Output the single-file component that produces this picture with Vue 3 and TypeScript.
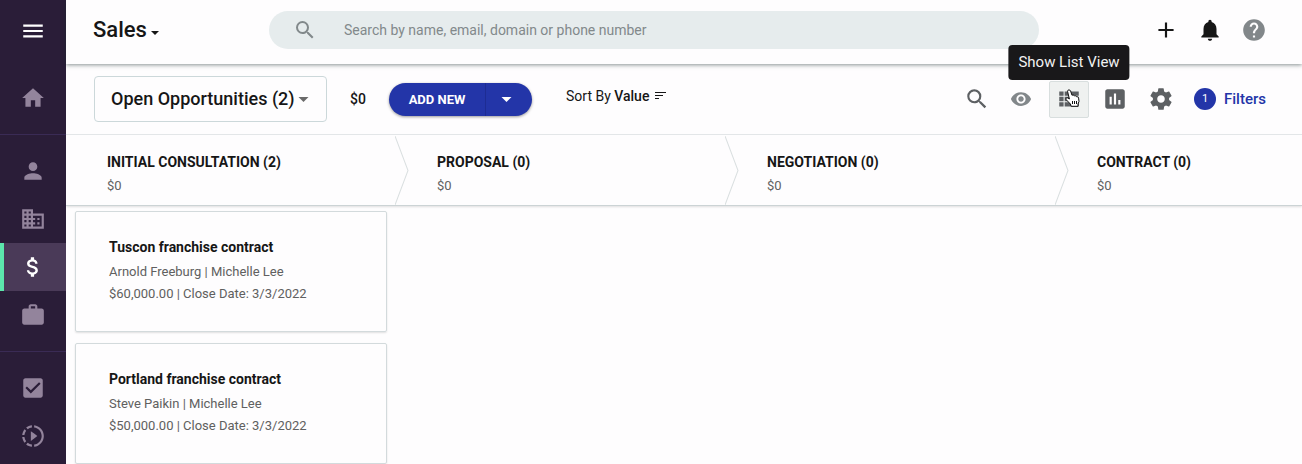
<script setup lang="ts">
import { ref } from 'vue'

interface NavItem {
  label: string
  path: string
  active?: boolean
}

interface Deal {
  title: string
  people: string
  details: string
}

interface Stage {
  name: string
  total: string
  deals: Deal[]
}

const searchPath =
  'M15.5 14h-.79l-.28-.27A6.47 6.47 0 0 0 16 9.5 6.5 6.5 0 1 0 9.5 16c1.61 0 3.09-.59 4.23-1.57l.27.28v.79l5 4.99L20.49 19l-4.99-5zm-6 0C7.01 14 5 11.99 5 9.5S7.01 5 9.5 5 14 7.01 14 9.5 11.99 14 9.5 14z'

const navGroups: NavItem[][] = [
  [{ label: 'Home', path: 'M10 20v-6h4v6h5v-8h3L12 3 2 12h3v8z' }],
  [
    {
      label: 'People',
      path: 'M12 12c2.21 0 4-1.79 4-4s-1.79-4-4-4-4 1.79-4 4 1.79 4 4 4zm0 2c-2.67 0-8 1.34-8 4v2h16v-2c0-2.66-5.33-4-8-4z',
    },
    {
      label: 'Companies',
      path: 'M12 7V3H2v18h20V7H12zM6 19H4v-2h2v2zm0-4H4v-2h2v2zm0-4H4V9h2v2zm0-4H4V5h2v2zm4 12H8v-2h2v2zm0-4H8v-2h2v2zm0-4H8V9h2v2zm0-4H8V5h2v2zm10 12h-8v-2h2v-2h-2v-2h2v-2h-2V9h8v10zm-2-8h-2v2h2v-2zm0 4h-2v2h2v-2z',
    },
    {
      label: 'Opportunities',
      active: true,
      path: 'M11.8 10.9c-2.27-.59-3-1.2-3-2.15 0-1.09 1.01-1.85 2.7-1.85 1.78 0 2.44.85 2.5 2.1h2.21c-.07-1.72-1.12-3.3-3.21-3.81V3h-3v2.16c-1.94.42-3.5 1.68-3.5 3.61 0 2.31 1.91 3.46 4.7 4.13 2.5.6 3 1.48 3 2.41 0 .69-.49 1.79-2.7 1.79-2.06 0-2.87-.92-2.98-2.1h-2.2c.12 2.19 1.76 3.42 3.68 3.83V21h3v-2.15c1.95-.37 3.5-1.5 3.5-3.55 0-2.84-2.43-3.81-4.7-4.4z',
    },
    {
      label: 'Projects',
      path: 'M20 6h-4V4c0-1.11-.89-2-2-2h-4c-1.11 0-2 .89-2 2v2H4c-1.11 0-1.99.89-1.99 2L2 19c0 1.11.89 2 2 2h16c1.11 0 2-.89 2-2V8c0-1.11-.89-2-2-2zm-6 0h-4V4h4v2z',
    },
  ],
  [
    {
      label: 'Tasks',
      path: 'M19 3H5c-1.11 0-2 .9-2 2v14c0 1.1.89 2 2 2h14c1.11 0 2-.9 2-2V5c0-1.1-.89-2-2-2zm-9 14l-5-5 1.41-1.41L10 14.17l7.59-7.59L19 8l-9 9z',
    },
    {
      label: 'Automations',
      path: 'M13.05 9.79L10 7.5v9l3.05-2.29L16 12zM11 4.07V2.05c-2.01.2-3.84 1-5.32 2.21L7.1 5.69c1.11-.86 2.44-1.44 3.9-1.62zM5.69 7.1L4.26 5.68C3.05 7.16 2.25 8.99 2.05 11h2.02c.18-1.46.76-2.79 1.62-3.9zM4.07 13H2.05c.2 2.01 1 3.84 2.21 5.32l1.43-1.43c-.86-1.1-1.44-2.43-1.62-3.89zm1.61 6.74C7.16 20.95 9 21.75 11 21.95v-2.02c-1.46-.18-2.79-.76-3.9-1.62l-1.42 1.43zM22 12c0 5.16-3.92 9.42-8.95 9.95v-2.02C16.97 19.41 20 16.05 20 12s-3.03-7.41-6.95-7.93V2.05C18.08 2.58 22 6.84 22 12z',
    },
  ],
]

const stages: Stage[] = [
  {
    name: 'INITIAL CONSULTATION (2)',
    total: '$0',
    deals: [
      {
        title: 'Tuscon franchise contract',
        people: 'Arnold Freeburg | Michelle Lee',
        details: '$60,000.00 | Close Date: 3/3/2022',
      },
      {
        title: 'Portland franchise contract',
        people: 'Steve Paikin | Michelle Lee',
        details: '$50,000.00 | Close Date: 3/3/2022',
      },
    ],
  },
  { name: 'PROPOSAL (0)', total: '$0', deals: [] },
  { name: 'NEGOTIATION (0)', total: '$0', deals: [] },
  { name: 'CONTRACT (0)', total: '$0', deals: [] },
]

const query = ref('')
const view = ref('open')
</script>

<template>
  <div class="app">
    <nav class="sidebar" aria-label="Main">
      <button class="menu" type="button" aria-label="Menu">
        <svg viewBox="0 0 24 24"><path d="M3 18h18v-2H3v2zm0-5h18v-2H3v2zm0-7v2h18V6H3z" /></svg>
      </button>
      <div v-for="(group, i) in navGroups" :key="i" class="group">
        <a
          v-for="item in group"
          :key="item.label"
          href="#"
          class="nav-item"
          :class="{ active: item.active }"
          :aria-label="item.label"
        >
          <svg viewBox="0 0 24 24"><path :d="item.path" /></svg>
        </a>
      </div>
    </nav>

    <div class="main">
      <header class="header">
        <button class="title" type="button">
          Sales
          <svg viewBox="0 0 8 4"><path d="M0 0h8L4 4z" /></svg>
        </button>
        <label class="search">
          <svg viewBox="0 0 24 24"><path :d="searchPath" /></svg>
          <input
            v-model="query"
            type="text"
            aria-label="Search"
            placeholder="Search by name, email, domain or phone number"
          />
        </label>
        <div class="header-actions">
          <button type="button" aria-label="Add">
            <svg viewBox="0 0 24 24"><path d="M19 13h-6v6h-2v-6H5v-2h6V5h2v6h6v2z" /></svg>
          </button>
          <button type="button" aria-label="Notifications">
            <svg viewBox="0 0 24 24">
              <path d="M12 22c1.1 0 2-.9 2-2h-4c0 1.1.89 2 2 2zm6-6v-5c0-3.07-1.64-5.64-4.5-6.32V4c0-.83-.67-1.5-1.5-1.5s-1.5.67-1.5 1.5v.68C7.63 5.36 6 7.92 6 11v5l-2 2v1h16v-1l-2-2z" />
            </svg>
          </button>
          <button class="help" type="button" aria-label="Help">
            <svg viewBox="0 0 24 24">
              <path d="M12 2C6.48 2 2 6.48 2 12s4.48 10 10 10 10-4.48 10-10S17.52 2 12 2zm1 17h-2v-2h2v2zm2.07-7.75l-.9.92C13.45 12.9 13 13.5 13 15h-2v-.5c0-1.1.45-2.1 1.17-2.83l1.24-1.26c.37-.36.59-.86.59-1.41 0-1.1-.9-2-2-2s-2 .9-2 2H8c0-2.21 1.79-4 4-4s4 1.79 4 4c0 .88-.36 1.68-.93 2.25z" />
            </svg>
          </button>
        </div>
      </header>

      <div class="toolbar">
        <div class="picker">
          <select v-model="view" aria-label="Opportunity view">
            <option value="open">Open Opportunities (2)</option>
          </select>
          <svg viewBox="0 0 10 5"><path d="M0 0h10L5 5z" /></svg>
        </div>
        <span class="sum">$0</span>
        <div class="split">
          <button class="add" type="button">ADD NEW</button>
          <button class="more" type="button" aria-label="More add options">
            <svg viewBox="0 0 10 5"><path d="M0 0h10L5 5z" /></svg>
          </button>
        </div>
        <button class="sort" type="button">
          <span>Sort By <b>Value</b></span>
          <svg viewBox="0 0 11 8"><path d="M0 0h11v1H0zM0 3h8v1H0zM0 6h4v1H0z" /></svg>
        </button>

        <div class="tools">
          <button type="button" aria-label="Search opportunities">
            <svg viewBox="0 0 24 24"><path :d="searchPath" /></svg>
          </button>
          <button class="eye" type="button" aria-label="Visibility">
            <svg viewBox="0 0 24 24">
              <path d="M12 4.5C7 4.5 2.73 7.61 1 12c1.73 4.39 6 7.5 11 7.5s9.27-3.11 11-7.5c-1.73-4.39-6-7.5-11-7.5zM12 17c-2.76 0-5-2.24-5-5s2.24-5 5-5 5 2.24 5 5-2.24 5-5 5zm0-8c-1.66 0-3 1.34-3 3s1.34 3 3 3 3-1.34 3-3-1.34-3-3-3z" />
            </svg>
          </button>
          <button class="list" type="button" aria-describedby="list-tip" aria-label="List view">
            <svg viewBox="0 0 24 24">
              <path d="M3 9h4V5H3v4zm0 5h4v-4H3v4zm5 0h13v-4H8v4zm0-9v4h13V5H8zM3 19h4v-4H3v4zm5 0h13v-4H8v4z" />
            </svg>
            <svg class="pointer" viewBox="0 0 15 18">
              <path
                d="M2.5 2.2C2.6.6 5 .4 5.6 2L7 6.3C8 5.7 9.1 6.1 9.5 7 10.4 6.5 11.4 7 11.7 7.8 12.7 7.5 13.5 8.2 13.6 9.2L14 12.4 13 15V17.3H6.2L5.4 15 1.2 10.7C.2 9.4 1.8 8.2 3 9L4.4 10z"
              />
              <path class="fingers" d="M7.5 12v3M9.5 12v3M11.5 12v3" />
            </svg>
            <span id="list-tip" class="tip" role="tooltip">Show List View</span>
          </button>
          <button type="button" aria-label="Reports">
            <svg viewBox="0 0 24 24">
              <path d="M19 3H5c-1.1 0-2 .9-2 2v14c0 1.1.9 2 2 2h14c1.1 0 2-.9 2-2V5c0-1.1-.9-2-2-2zM9 17H7v-7h2v7zm4 0h-2V7h2v10zm4 0h-2v-4h2v4z" />
            </svg>
          </button>
          <button type="button" aria-label="Settings">
            <svg viewBox="0 0 24 24">
              <path d="M19.43 12.98c.04-.32.07-.64.07-.98s-.03-.66-.07-.98l2.11-1.65c.19-.15.24-.42.12-.64l-2-3.46c-.12-.22-.39-.3-.61-.22l-2.49 1c-.52-.4-1.08-.73-1.69-.98l-.38-2.65C14.46 2.18 14.25 2 14 2h-4c-.25 0-.46.18-.49.42l-.38 2.65c-.61.25-1.17.59-1.69.98l-2.49-1c-.23-.09-.49 0-.61.22l-2 3.46c-.13.22-.07.49.12.64l2.11 1.65c-.04.32-.07.65-.07.98s.03.66.07.98l-2.11 1.65c-.19.15-.24.42-.12.64l2 3.46c.12.22.39.3.61.22l2.49-1c.52.4 1.08.73 1.69.98l.38 2.65c.03.24.24.42.49.42h4c.25 0 .46-.18.49-.42l.38-2.65c.61-.25 1.17-.59 1.69-.98l2.49 1c.23.09.49 0 .61-.22l2-3.46c.12-.22.07-.49-.12-.64l-2.11-1.65zM12 15.5c-1.93 0-3.5-1.57-3.5-3.5s1.57-3.5 3.5-3.5 3.5 1.57 3.5 3.5-1.57 3.5-3.5 3.5z" />
            </svg>
          </button>
        </div>
        <button class="filters" type="button"><span class="count">1</span>Filters</button>
      </div>

      <main class="board">
        <div class="stages">
          <section v-for="(stage, i) in stages" :key="stage.name" class="stage">
            <svg v-if="i > 0" class="chevron" viewBox="0 0 14 68" preserveAspectRatio="none">
              <path d="M0 0L13 34L0 68" />
            </svg>
            <h2>{{ stage.name }}</h2>
            <p>{{ stage.total }}</p>
          </section>
        </div>
        <div class="lanes">
          <div v-for="stage in stages" :key="stage.name" class="lane">
            <article v-for="deal in stage.deals" :key="deal.title" class="card">
              <h3>{{ deal.title }}</h3>
              <p>{{ deal.people }}</p>
              <p>{{ deal.details }}</p>
            </article>
          </div>
        </div>
      </main>
    </div>
  </div>
</template>

<style>
body {
  background: #fefdfe;
}
</style>

<style scoped>
* {
  box-sizing: border-box;
}

.app {
  display: flex;
  min-height: 100vh;
  font-family: Roboto, "Liberation Sans", sans-serif;
  color: #161616;
}

button,
select,
input {
  margin: 0;
  padding: 0;
  border: 0;
  background: none;
  color: inherit;
  font: inherit;
}

svg {
  display: block;
  flex: none;
  fill: currentColor;
}

h2,
h3,
p {
  margin: 0;
}

.sidebar {
  flex: none;
  width: 66px;
  background: #2a1d38;
  color: #93849c;
}

.sidebar svg {
  width: 26px;
  height: 26px;
}

.menu {
  display: grid;
  place-items: center;
  width: 100%;
  height: 62px;
  color: #fff;
}

.group {
  padding: 12px 0;
}

.group + .group {
  border-top: 1px solid #3a2b55;
}

.nav-item {
  display: grid;
  place-items: center;
  height: 48px;
  color: inherit;
}

.nav-item.active {
  background: linear-gradient(to right, #5ce6ac 4px, #4a3a58 4px);
  color: #fff;
}

.main {
  flex: 1;
  min-width: 0;
}

.header {
  position: relative;
  display: flex;
  align-items: center;
  height: 64px;
  padding: 0 35px 4px 27px;
  box-shadow: 0 1px 4px rgba(20, 40, 40, 0.5);
}

.title {
  display: flex;
  align-items: center;
  gap: 4px;
  width: 176px;
  font-size: 22px;
  font-weight: 500;
  line-height: 28px;
}

.title svg {
  width: 8px;
  height: 4px;
  margin-top: 6px;
}

.search {
  display: flex;
  flex: 1;
  align-items: center;
  gap: 27px;
  height: 38px;
  margin-right: 114px;
  padding: 0 24px;
  border-radius: 19px;
  background: #e6eced;
  color: #82898b;
}

.search svg {
  width: 24px;
  height: 24px;
}

.search input {
  flex: 1;
  min-width: 0;
  outline: 0;
  font-size: 14px;
  line-height: 20px;
}

.search input::placeholder {
  color: #82898b;
  opacity: 1;
}

.header-actions {
  display: flex;
  gap: 18px;
}

.header-actions svg {
  width: 26px;
  height: 26px;
}

.help {
  color: #82878a;
}

.toolbar {
  display: flex;
  align-items: center;
  height: 71px;
  padding: 0 36px 0 28px;
  border-bottom: 1px solid #e3e6e8;
}

.picker {
  position: relative;
  display: flex;
  align-items: center;
  width: 233px;
  height: 46px;
  border: 1px solid #ccd8da;
  border-radius: 4px;
}

.picker select {
  width: 100%;
  height: 100%;
  padding: 0 0 2px 16px;
  appearance: none;
  font-size: 18px;
  font-weight: 500;
}

.picker svg {
  position: absolute;
  right: 17px;
  width: 11px;
  height: 5px;
  color: #6a6a6a;
  pointer-events: none;
}

.sum {
  width: 39px;
  margin-left: 23px;
  font-size: 14px;
  font-weight: 500;
}

.split {
  display: flex;
  height: 33px;
  border-radius: 17px;
  background: #2335a8;
  box-shadow: 0 1px 3px rgba(0, 0, 0, 0.4);
  color: #fff;
}

.add {
  width: 96px;
  font-size: 13px;
  font-weight: 700;
}

.more {
  display: grid;
  place-items: center;
  width: 47px;
  padding-right: 5px;
  border-left: 1px solid #1d2c93;
}

.more svg {
  width: 11px;
  height: 5px;
}

.sort {
  display: flex;
  align-items: center;
  gap: 6px;
  margin-left: 34px;
  padding-bottom: 6px;
  font-size: 14px;
  line-height: 20px;
}

.sort b {
  font-weight: 500;
}

.sort svg {
  width: 11px;
  height: 8px;
}

.tools {
  display: flex;
  align-items: center;
  gap: 6px;
  margin-left: auto;
  color: #5d6063;
}

.tools button {
  display: grid;
  place-items: center;
  width: 40px;
  height: 37px;
}

.tools svg {
  width: 26px;
  height: 26px;
}

.tools .eye {
  width: 36px;
  margin-right: 4px;
  color: #82878a;
}

.tools .eye svg {
  width: 22px;
  height: 22px;
}

.tools .list {
  position: relative;
  border: 1px solid #d8dede;
  border-radius: 2px;
  background: #eff1f0;
}

.tools .pointer {
  position: absolute;
  top: 7px;
  left: 15px;
  width: 15px;
  height: 18px;
  fill: #fff;
  stroke: #111;
}

.tip {
  position: absolute;
  bottom: 37px;
  left: 50%;
  padding: 0 10px;
  border-radius: 4px;
  background: #19181a;
  color: #f2f2f2;
  font-size: 15px;
  line-height: 35px;
  white-space: nowrap;
  transform: translateX(-50%);
}

.filters {
  display: flex;
  align-items: center;
  gap: 8px;
  margin-left: 13px;
  color: #2335a8;
  font-size: 15px;
  font-weight: 500;
}

.count {
  width: 22px;
  border-radius: 11px;
  background: #2335a8;
  color: #fff;
  font-size: 11px;
  font-weight: 400;
  line-height: 22px;
  text-align: center;
}

.board {
  overflow: hidden;
}

.stages {
  display: flex;
  border-bottom: 1px solid #ccd3d5;
  box-shadow: 0 1px 2px rgba(0, 0, 0, 0.12);
}

.stage {
  position: relative;
  flex: none;
  width: 330px;
  height: 70px;
  padding: 15px 0 0 41px;
}

.chevron {
  position: absolute;
  top: 1px;
  left: -1px;
  width: 14px;
  height: 69px;
  fill: none;
  stroke: #dadfe0;
}

.stage h2 {
  font-size: 14px;
  font-weight: 700;
  line-height: 24px;
}

.stage p {
  color: #626262;
  font-size: 13px;
  line-height: 24px;
}

.lanes {
  display: flex;
}

.lane {
  display: flex;
  flex: none;
  flex-direction: column;
  gap: 11px;
  width: 330px;
  padding: 5px 9px 0;
}

.card {
  padding: 23px 33px 26px;
  border: 1px solid #d3dadc;
  border-radius: 2px;
  box-shadow: 0 1px 2px rgba(0, 0, 0, 0.12);
}

.card h3 {
  margin-bottom: 1px;
  font-size: 14px;
  font-weight: 700;
  line-height: 25px;
}

.card p {
  color: #606060;
  font-size: 13px;
  line-height: 22px;
}
</style>
